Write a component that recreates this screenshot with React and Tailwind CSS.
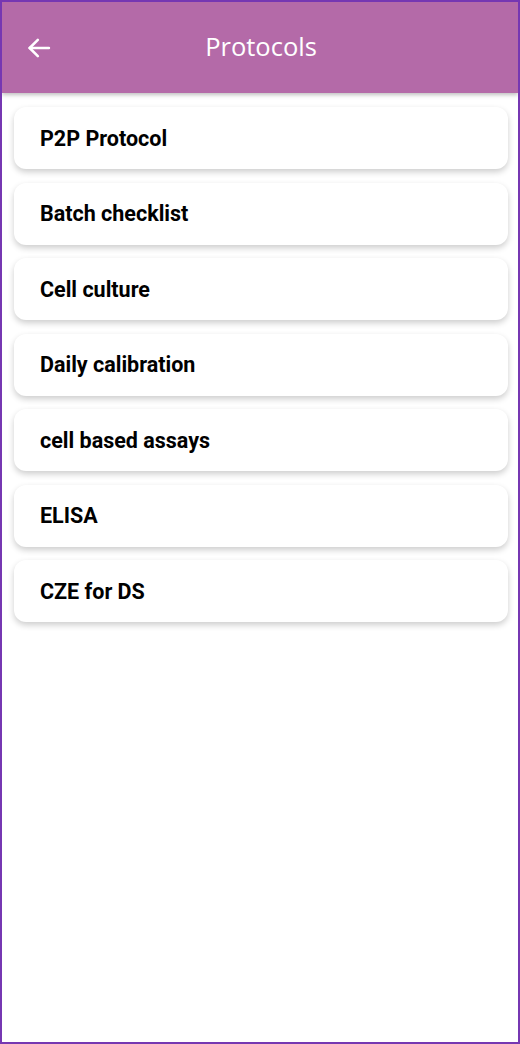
import React from 'react'

const items = [
  'P2P Protocol',
  'Batch checklist',
  'Cell culture',
  'Daily calibration',
  'cell based assays',
  'ELISA',
  'CZE for DS',
]

export default function App() {
  return (
    <div className="w-[520px] h-[1044px] border-2 border-[#7637b2] bg-white overflow-hidden flex flex-col">
      <header className="h-[91px] shrink-0 bg-[#b46aa8] shadow-[0_2px_4px_rgba(0,0,0,0.25)] relative z-10 flex items-center px-[23px]">
        <svg width="28" height="28" viewBox="0 0 24 24" fill="none" stroke="white" strokeWidth="2.2" strokeLinecap="round" strokeLinejoin="round">
          <path d="M20.5 12H4" />
          <path d="M11 5l-7 7 7 7" />
        </svg>
        <h1 className="flex-1 text-center pr-[26px] text-white text-[25.5px] font-['Open_Sans',sans-serif] font-normal -mt-[3px]">
          Protocols
        </h1>
      </header>

      <main className="flex flex-col gap-[13.5px] pt-[14px] pl-3 pr-2.5">
        {items.map((t) => (
          <div
            key={t}
            className="h-[62px] bg-white rounded-xl shadow-[0_3px_6px_rgba(0,0,0,0.2)] flex items-center px-[26px]"
          >
            <span className="text-[21.5px] font-bold text-black font-['Roboto',sans-serif] mt-[2px]">{t}</span>
          </div>
        ))}
      </main>
    </div>
  )
}
